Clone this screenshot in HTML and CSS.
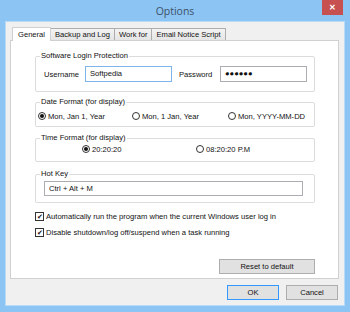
FILE: index.html
```html
<!DOCTYPE html>
<html lang="en">
<head>
    <meta charset="UTF-8">
    <title>Options</title>
    <link rel="stylesheet" href="styles.css">
</head>
<body>
    <div class="window">
        <div class="titlebar">
            <span class="title">Options</span>
            <div class="close">&#x2715;</div>
        </div>
        <div class="client">
            <div class="tabs">
                <div class="tab active">General</div>
                <div class="tab">Backup and Log</div>
                <div class="tab">Work for</div>
                <div class="tab">Email Notice Script</div>
            </div>
            <div class="panel">
                <div class="group group-login">
                    <span class="legend">Software Login Protection</span>
                    <div class="login-row">
                        <span class="field-label">Username</span>
                        <div class="input focused">Softpedia</div>
                        <span class="field-label pass-label">Password</span>
                        <div class="input">&#9679;&#9679;&#9679;&#9679;&#9679;&#9679;</div>
                    </div>
                </div>

                <div class="group group-date">
                    <span class="legend">Date Format (for display)</span>
                    <div class="radio-row">
                        <label class="radio col-1"><span class="dot checked"></span>Mon, Jan 1, Year</label>
                        <label class="radio col-2"><span class="dot"></span>Mon, 1 Jan, Year</label>
                        <label class="radio col-3"><span class="dot"></span>Mon, YYYY-MM-DD</label>
                    </div>
                </div>

                <div class="group group-time">
                    <span class="legend">Time Format (for display)</span>
                    <div class="radio-row time-row">
                        <label class="radio time-1"><span class="dot checked"></span>20:20:20</label>
                        <label class="radio"><span class="dot"></span>08:20:20 P.M</label>
                    </div>
                </div>

                <div class="group group-hotkey">
                    <span class="legend">Hot Key</span>
                    <div class="input hotkey">Ctrl + Alt + M</div>
                </div>

                <label class="check first"><span class="box">&#10004;</span>Automatically run the program when the current Windows user log in</label>
                <label class="check"><span class="box">&#10004;</span>Disable shutdown/log off/suspend when a task running</label>

                <div class="reset-row">
                    <button class="btn reset">Reset to default</button>
                </div>
            </div>
            <div class="buttons">
                <button class="btn default">OK</button>
                <button class="btn">Cancel</button>
            </div>
        </div>
    </div>
</body>
</html>
```

FILE: styles.css
```css
body {
    margin: 0;
    width: 350px;
    height: 312px;
    overflow: hidden;
    background: #8cc4f3;
    font-family: 'Liberation Sans', Arial, sans-serif;
    font-size: 7.6px;
    color: #111;
}

.window {
    display: flex;
    flex-direction: column;
    height: 312px;
}

.titlebar {
    position: relative;
    height: 22px;
    text-align: center;
}

.title {
    display: inline-block;
    margin-top: 4px;
    font-family: 'Open Sans', sans-serif;
    font-size: 10.5px;
    color: #3d5368;
}

.close {
    position: absolute;
    right: 7px;
    top: 0;
    width: 21px;
    height: 15px;
    background: #c75050;
    color: #fff;
    font-size: 8px;
    font-weight: bold;
    line-height: 15px;
    text-align: center;
}

.client {
    flex: 1;
    margin: 0 6px 7px;
    padding: 5px 5px 5px 4px;
    background: #f0f0f0;
    box-shadow: 0 0 0 1px #b9dbf8;
}

/* tabs */
.tabs {
    display: flex;
    align-items: flex-end;
    height: 13px;
    padding-left: 2px;
}

.tab {
    height: 11px;
    padding: 0 4px;
    border: 1px solid #adadad;
    border-bottom: none;
    background: linear-gradient(#f3f3f3, #e5e5e5);
    line-height: 11px;
    margin-left: -1px;
}

.tab.active {
    height: 13px;
    margin-left: 0;
    margin-bottom: -1px;
    background: #fff;
    border-color: #d0d0d0;
    position: relative;
    z-index: 1;
    line-height: 13px;
    padding: 0 5px;
}

.panel {
    height: 239px;
    box-sizing: border-box;
    background: #fff;
    border: 1px solid #d0d0d0;
    padding: 0 23px 0 24px;
}

/* group boxes */
.group {
    position: relative;
    box-sizing: border-box;
    border: 1px solid #dcdcdc;
    border-radius: 2px;
}

.legend {
    position: absolute;
    top: -6px;
    left: 4px;
    padding: 0 1px;
    background: #fff;
    line-height: 10px;
}

.group-login {
    margin-top: 15px;
    height: 36px;
    padding: 9px 0 0 8px;
}

.login-row {
    display: flex;
    align-items: center;
}

.field-label {
    width: 41px;
}

.pass-label {
    margin-left: 7px;
}

.input {
    box-sizing: border-box;
    width: 87px;
    height: 16px;
    padding-left: 4px;
    border: 1px solid #abadb3;
    line-height: 14px;
    background: #fff;
}

.input.focused {
    border-color: #7eb4ea;
}

.group-date {
    margin-top: 10px;
    height: 25px;
    padding-top: 7px;
}

.group-time {
    margin-top: 11px;
    height: 24px;
    padding-top: 4px;
}

.radio-row {
    display: flex;
    height: 12px;
    align-items: center;
}

.radio {
    display: flex;
    align-items: center;
}

.col-1 {
    width: 94px;
    padding-left: 2px;
}

.col-2 {
    width: 96px;
}

.time-row {
    padding-left: 46px;
}

.time-1 {
    width: 114px;
}

.dot {
    position: relative;
    box-sizing: border-box;
    width: 8px;
    height: 8px;
    margin-right: 2px;
    border: 1px solid #333;
    border-radius: 50%;
    background: #fff;
}

.dot.checked::after {
    content: "";
    position: absolute;
    left: 1px;
    top: 1px;
    width: 4px;
    height: 4px;
    border-radius: 50%;
    background: #111;
}

.group-hotkey {
    margin-top: 12px;
    height: 29px;
    padding: 6px 0 0 8px;
}

.input.hotkey {
    width: 259px;
    height: 15px;
    line-height: 13px;
}

/* checkboxes */
.check {
    display: flex;
    align-items: center;
    height: 12px;
    margin-top: 4px;
}

.check.first {
    margin-top: 7px;
}

.box {
    box-sizing: border-box;
    width: 9px;
    height: 9px;
    margin-right: 2px;
    border: 1px solid #333;
    font-size: 7px;
    line-height: 7px;
    text-align: center;
    color: #111;
}

/* buttons */
.btn {
    box-sizing: border-box;
    height: 15px;
    padding: 0;
    border: 1px solid #adadad;
    background: #e1e1e1;
    font-family: inherit;
    font-size: inherit;
    color: #111;
}

.reset-row {
    margin-top: 21px;
    text-align: right;
}

.reset {
    width: 96px;
}

.buttons {
    display: flex;
    justify-content: flex-end;
    gap: 7px;
    margin-top: 6px;
    padding-right: 1px;
}

.buttons .btn {
    width: 52px;
}

.btn.default {
    border-color: #3399ff;
}
```
